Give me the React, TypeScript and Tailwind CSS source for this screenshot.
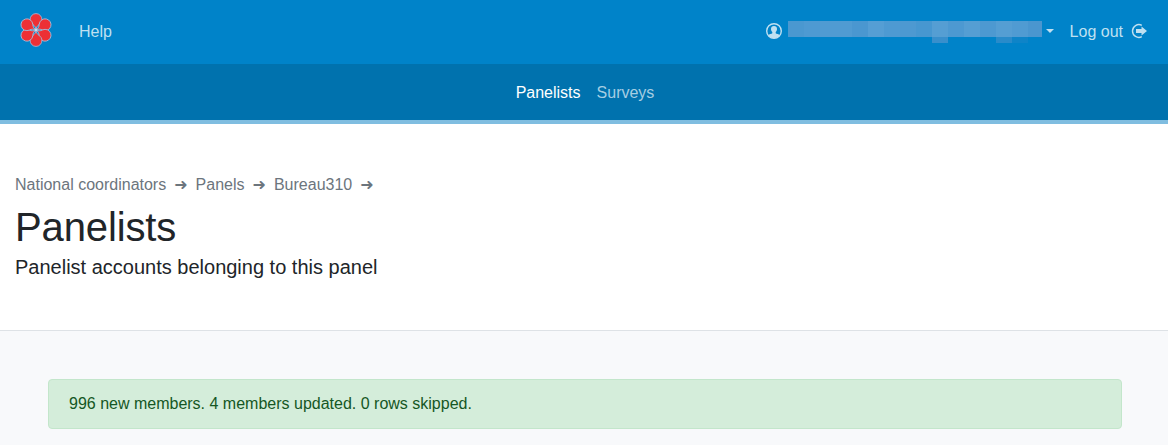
const petals = [0, 60, 120, 180, 240, 300];

function Logo() {
  return (
    <svg className="block h-[36px] w-[36px]" viewBox="-18 -18 36 36" aria-hidden="true">
      {petals.map((angle) => (
        <path
          key={angle}
          transform={`rotate(${angle})`}
          d="M0 0C-.3-2.800-1-4-3.400-5.700a5.900 5.900 0 1 1 6.800 0C1-4 .3-2.800 0 0Z"
          fill="#ed3035"
          stroke="#a9bfdc"
          strokeWidth=".8"
        />
      ))}
      <circle r="1.4" fill="#c5dcec" />
    </svg>
  );
}

function UserIcon() {
  return (
    <svg className="block h-4 w-4" viewBox="0 0 16 16" fill="currentColor" aria-hidden="true">
      <circle cx="8" cy="8" r="7.3" fill="none" stroke="currentColor" strokeWidth="1.4" />
      <path d="M8 3C6 3 5 4.200 5 6c0 1.300.6 2.500 1.300 3.100v1.100c-.5.6-3.200.7-4.300 1.900A7.300 7.300 0 0 0 8 15.300a7.300 7.300 0 0 0 6-3.200c-1.100-1.200-3.800-1.300-4.300-1.900V9.100c.7-.6 1.300-1.800 1.300-3.100C11 4.200 10 3 8 3Z" />
    </svg>
  );
}

function LogoutIcon() {
  return (
    <svg className="block h-4 w-4" viewBox="0 0 16 16" aria-hidden="true">
      <path d="M10.800 2.300A6.400 6.400 0 1 0 10.800 13.700" fill="none" stroke="currentColor" strokeWidth="1.400" />
      <path d="M5 6h5.500V3.500L16 8l-5.500 4.500V10H5Z" fill="currentColor" />
    </svg>
  );
}

const redacted = [
  "w-4 bg-[#4a98d0]", "w-4 bg-[#4e9ad2]", "w-4 bg-[#509bd2]", "w-4 bg-[#509bd2]",
  "w-4 bg-[#4a97d0]", "w-4 bg-[#559ed4]", "w-4 bg-[#4e9ad2]", "w-4 bg-[#4d99d1]",
  "w-4 bg-[#4797d0]", "w-4 bg-[#559ed3]", "w-4 bg-[#4d99d1]", "w-4 bg-[#559ed3]",
  "w-4 bg-[#4d99d1]", "w-4 bg-[#559ed3]", "w-4 bg-[#509bd2]", "w-[14px] bg-[#4a96cf]",
];

const crumbs = ["National coordinators", "Panels", "Bureau310"];

export default function App() {
  return (
    <div className="min-h-[445px] bg-[#f8f9fb] font-['Liberation_Sans',Arial,sans-serif] text-base text-[#212529]">
      <header className="flex h-16 items-center bg-[#0083c9] pl-[18px] pr-[21px] text-[#bfe0f1]">
        <div className="-mt-1"><Logo /></div>
        <a className="ml-[25px]">Help</a>
        <div className="ml-auto flex items-center">
          <div className="-mt-0.5"><UserIcon /></div>
          <div className="relative -mt-1.5 ml-[6px] flex h-4 w-[254px]">
            {redacted.map((cell, i) => (
              <span key={i} className={cell} />
            ))}
            <span className="absolute left-36 top-4 h-1.5 w-4 bg-[#388fcc]" />
            <span className="absolute left-52 top-4 h-1.5 w-4 bg-[#298bca]" />
            <span className="absolute left-56 top-4 h-1.5 w-4 bg-[#0e84c8]" />
          </div>
          <span className="-mt-0.5 ml-1 h-0 w-0 border-x-[4.8px] border-t-[4.8px] border-x-transparent border-t-current" />
          <a className="ml-4 flex items-center">
            Log out
            <span className="-mt-0.5 ml-2"><LogoutIcon /></span>
          </a>
        </div>
      </header>
      <nav className="flex h-[60px] items-center justify-center gap-4 border-b-4 border-[#7fbde0] bg-[#0072ae] pl-0.5 pt-0.5">
        <a className="text-white">Panelists</a>
        <a className="text-[#a6cee3]">Surveys</a>
      </nav>
      <section className="h-[207px] border-b border-[#dee2e6] bg-white px-[15px] pt-[49px]">
        <div className="flex h-6 items-center text-[#6c757d]">
          {crumbs.map((crumb) => (
            <span key={crumb} className="flex items-center">
              <a>{crumb}</a>
              <span className="px-2 font-['DejaVu_Sans',sans-serif]">➜</span>
            </span>
          ))}
        </div>
        <h1 className="mt-1.5 text-[40px] leading-12 tracking-[-0.12px]">Panelists</h1>
        <p className="mt-px text-xl leading-[30px]">Panelist accounts belonging to this panel</p>
      </section>
      <main className="pl-12 pr-[46px] pt-12">
        <div className="flex h-[50px] items-center rounded border border-[#c3e6cb] bg-[#d4edda] px-5 text-[#155724]">
          996 new members. 4 members updated. 0 rows skipped.
        </div>
      </main>
    </div>
  );
}
